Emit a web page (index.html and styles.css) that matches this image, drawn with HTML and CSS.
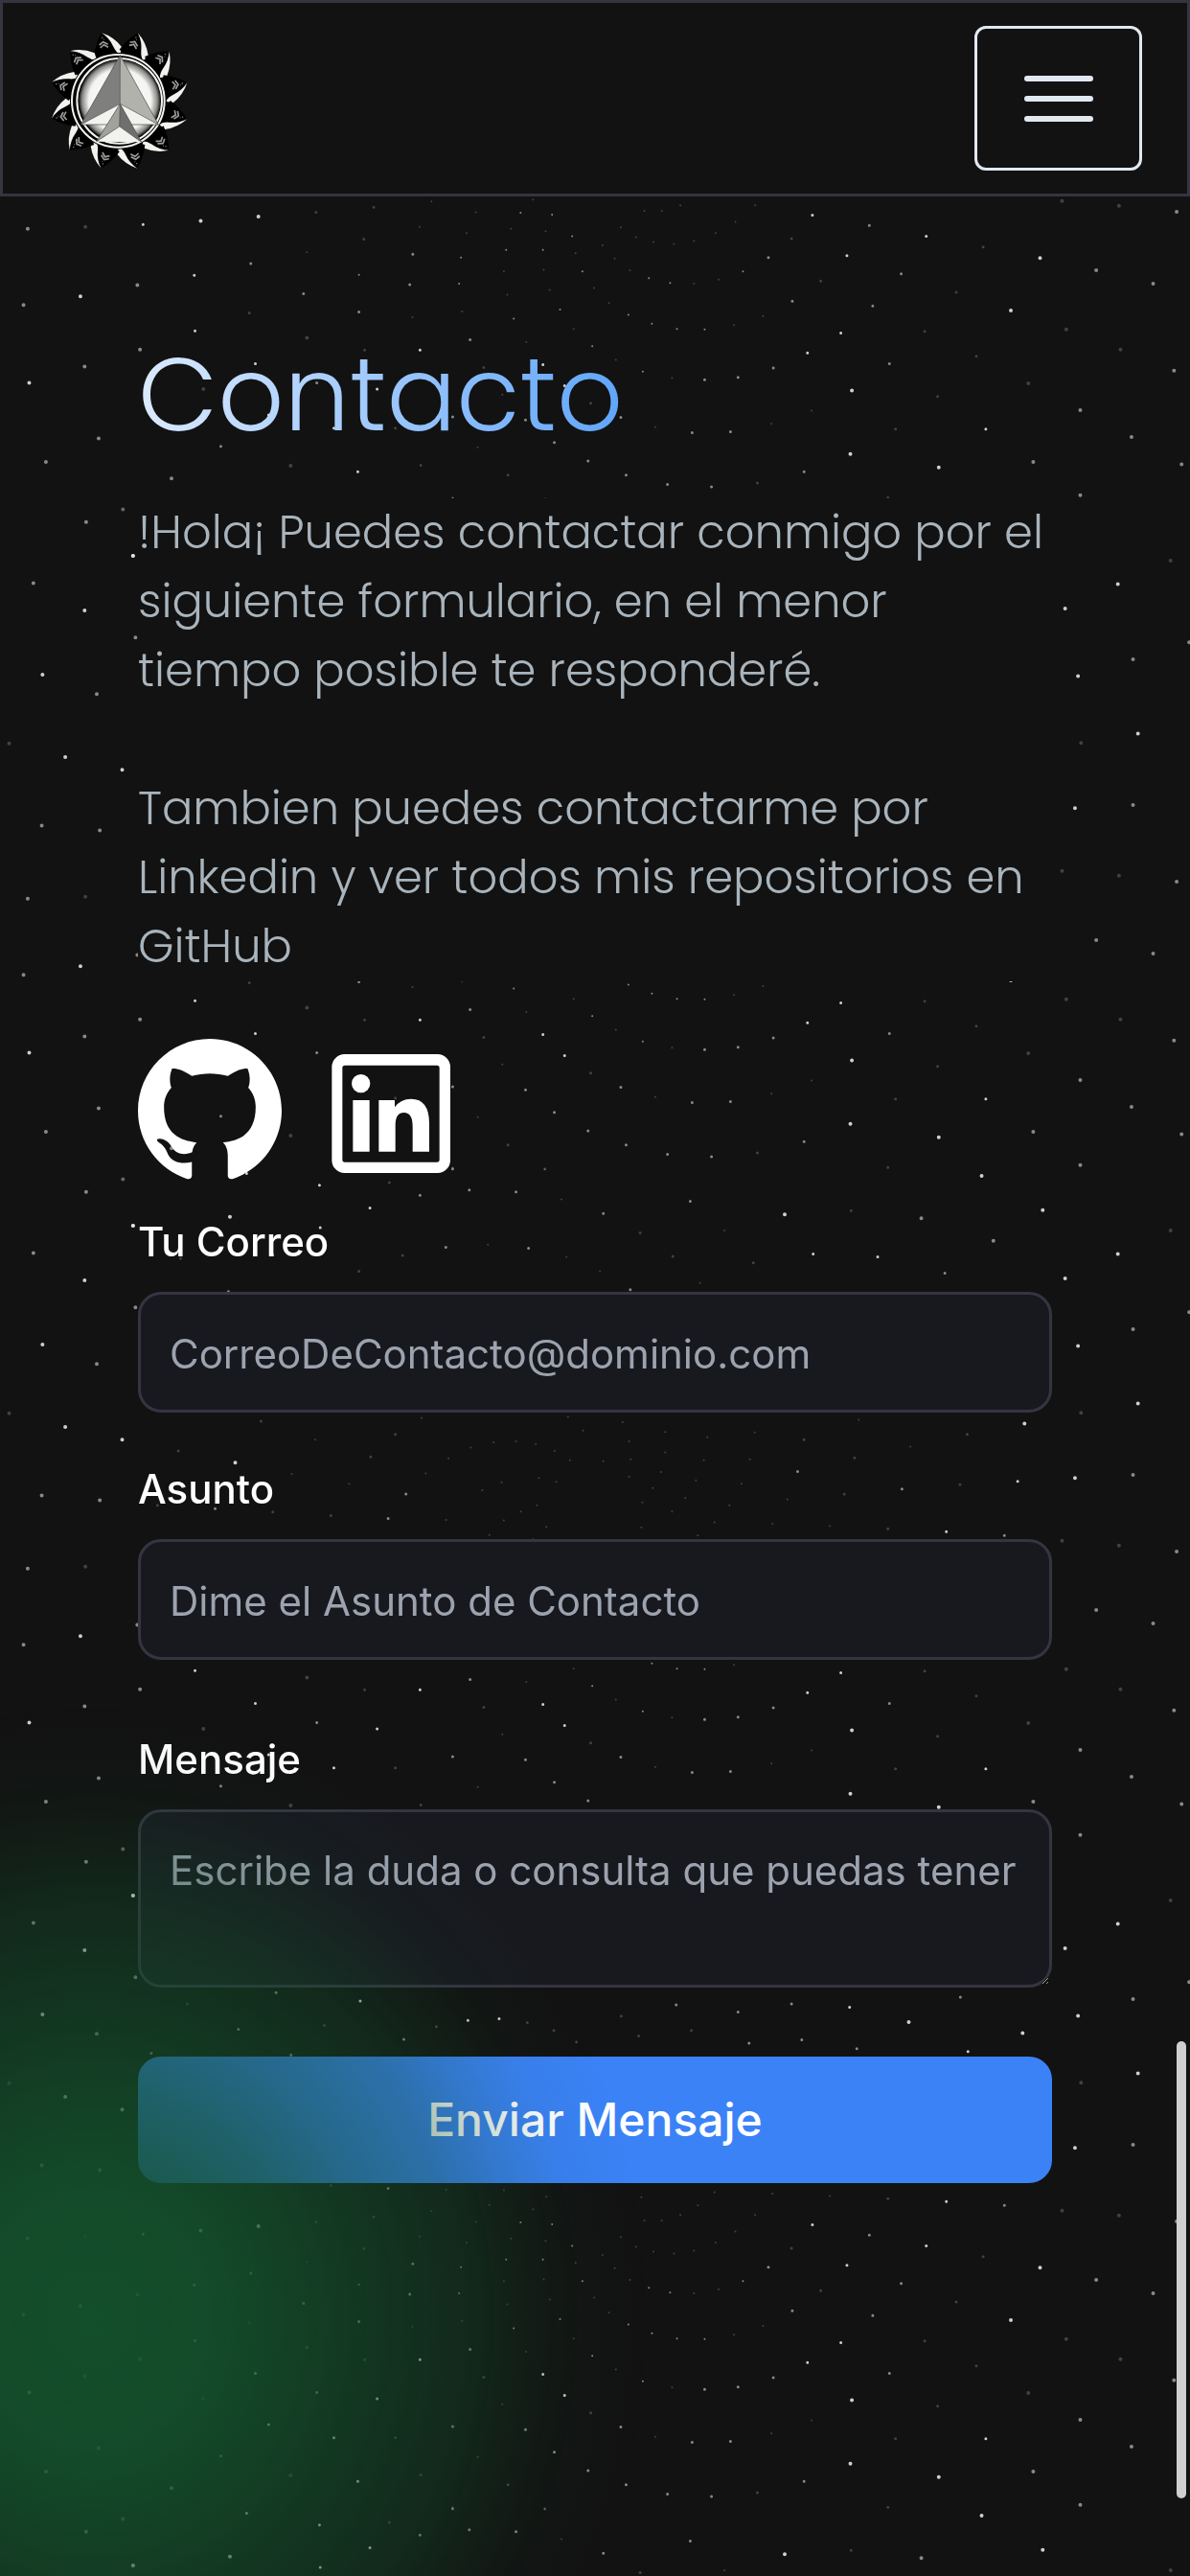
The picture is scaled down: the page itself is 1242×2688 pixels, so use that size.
FILE: index.html
```html
<!DOCTYPE html>
<html lang="es">
<head>
<meta charset="utf-8">
<meta name="viewport" content="width=device-width, initial-scale=1">
<title>Contacto</title>
<link rel="stylesheet" href="styles.css">
</head>
<body>
<svg class="stars" aria-hidden="true">
  <defs>
    <g id="sky">
      <!-- upper left -->
      <g transform="translate(0 200) scale(.396 .51)">
        <path class="s4 hi" d="M212 214h0M77 391h0M351 745h0M529 60h0M681 51h0"/>
        <path class="s4 md" d="M73 76h0M62 232h0M223 358h0M369 323h0M121 553h0M452 587h0M362 191h0M260 505h0"/>
        <path class="s4 lo" d="M225 72h0M809 299h0M324 650h0M536 404h0M766 561h0"/>
        <path class="s3 hi" d="M377 67h0M512 171h0M514 285h0M673 352h0M943 573h0M1107 324h0M1431 354h0M880 484h0M708 457h0M994 404h0M1488 397h0"/>
        <path class="s3 md" d="M661 147h0M800 209h0M1088 128h0M946 246h0M1080 190h0M582 521h0M835 391h0M1239 303h0M1193 461h0M1385 467h0M1461 513h0M1550 551h0"/>
        <path class="s3 lo" d="M985 32h0M833 42h0M959 97h0M657 248h0M961 324h0M1109 560h0M1339 580h0M1042 484h0M1557 433h0M1275 360h0"/>
        <path class="s2 md" d="M1334 119h0M1476 241h0M1354 260h0M1508 91h0M1455 47h0M1431 119h0M1372 43h0M1561 316h0M1535 163h0M946 170h0M1210 188h0M1215 135h0"/>
        <path class="s2 lo" d="M809 124h0M1137 20h0M1106 72h0M1087 257h0M1328 163h0M1337 211h0M1438 81h0M1433 160h0M1449 201h0M1517 126h0M1405 16h0M1347 76h0M1230 85h0M1259 523h0M1324 415h0M1512 281h0M1387 308h0M1218 245h0M1193 626h0M1436 630h0M1254 42h0M1566 197h0"/>
      </g>
      <!-- upper right -->
      <g transform="translate(621 200) scale(.396 .51)">
        <path class="s4 hi" d="M1096 243h0M677 407h0M673 537h0M1173 136h0M906 564h0"/>
        <path class="s4 md" d="M1533 41h0M1321 161h0M1471 188h0M1279 447h0M1414 502h0M1546 558h0M1279 621h0M1155 553h0M1526 366h0"/>
        <path class="s4 lo" d="M1231 19h0M1381 29h0M1242 282h0M1385 323h0M1142 392h0"/>
        <path class="s3 hi" d="M573 48h0M664 131h0M873 91h0M648 289h0M560 330h0M1030 486h0"/>
        <path class="s3 md" d="M723 69h0M457 135h0M520 224h0M732 234h0M470 361h0M377 380h0M289 385h0M807 168h0M776 352h0M357 491h0M256 493h0M307 604h0M82 580h0M191 599h0M68 462h0M551 573h0"/>
        <path class="s3 lo" d="M1023 113h0M952 206h0M869 286h0M1005 337h0M903 419h0M792 486h0M428 596h0M595 183h0M772 626h0M518 96h0"/>
        <path class="s2 md" d="M390 163h0M289 282h0M216 281h0M150 270h0M198 187h0M142 177h0M88 252h0M126 368h0"/>
        <path class="s2 lo" d="M130 39h0M176 39h0M225 28h0M422 28h0M318 85h0M261 101h0M261 188h0M208 107h0M154 103h0M108 93h0M68 73h0M20 110h0M52 137h0M92 161h0M37 228h0M366 273h0M443 255h0M203 381h0M55 344h0M159 482h0M465 475h0M571 448h0M370 62h0M326 180h0"/>
      </g>
      <!-- lower left -->
      <g transform="translate(0 301) scale(.396 .51)">
        <path class="s4 hi" d="M606 529h0M223 659h0M112 790h0M172 959h0M322 985h0M620 1032h0"/>
        <path class="s4 md" d="M88 603h0M227 478h0M255 830h0M357 714h0M110 1099h0M263 1109h0M350 547h0"/>
        <path class="s4 lo" d="M324 452h0M24 931h0"/>
        <path class="s3 hi" d="M842 464h0M975 511h0M844 551h0M650 440h0"/>
        <path class="s3 md" d="M1237 474h0M1193 431h0M1107 485h0M567 1126h0M1023 1146h0M1070 1096h0M1175 591h0M1393 593h0M602 682h0M1360 478h0M719 607h0"/>
        <path class="s3 lo" d="M1026 459h0M1436 431h0M946 640h0M1061 608h0M470 1008h0M688 947h0M415 1119h0M719 1133h0M872 1140h0M977 1020h0M1042 974h0M476 614h0"/>
        <path class="s2 lo" d="M1480 493h0M1286 586h0M1493 611h0M831 985h0M1111 940h0M769 1055h0M920 1075h0M1122 1054h0M1182 1023h0M1241 1001h0M1301 990h0M1360 988h0M1412 994h0M1462 1008h0M1502 1027h0M1537 966h0M1497 938h0M1466 1071h0M1420 1063h0M1322 1072h0M1271 1088h0M1373 1132h0M1415 1119h0M1440 1163h0M1328 1150h0M1176 1149h0M1290 1180h0"/>
      </g>
      <!-- lower right -->
      <g transform="translate(621 301) scale(.396 .51)">
        <path class="s4 hi" d="M1019 445h0M1180 515h0M1378 605h0M1239 655h0M500 524h0M1273 793h0M1431 911h0M1265 1063h0M1132 952h0"/>
        <path class="s4 md" d="M860 532h0M1050 578h0M1418 1057h0M1566 724h0M1418 759h0"/>
        <path class="s4 lo" d="M1517 557h0M1281 930h0"/>
        <path class="s3 hi" d="M575 605h0M745 611h0M926 1173h0M1114 1070h0"/>
        <path class="s3 md" d="M251 497h0M22 522h0M922 644h0M93 678h0M809 1086h0M1079 1181h0M534 1050h0"/>
        <path class="s3 lo" d="M675 516h0M417 623h0M119 562h0M205 610h0M981 974h0M962 1077h0M657 1096h0M772 1167h0M551 985h0M684 1022h0"/>
        <path class="s2 lo" d="M341 557h0M277 664h0M13 640h0M695 944h0M831 999h0M421 970h0M296 980h0M185 969h0M73 949h0M90 988h0M22 1029h0M94 1025h0M185 1011h0M287 1027h0M408 1025h0M174 1051h0M90 1061h0M152 1084h0M266 1068h0M386 1075h0M507 1107h0M354 1119h0M238 1104h0M125 1113h0M203 1132h0M315 1154h0M468 1157h0M619 1162h0M122 1164h0M271 1181h0"/>
      </g>
      <!-- central band -->
      <g transform="translate(0 382) scale(.446 .579)">
        <path class="s3 hi" d="M843 532h0M1095 567h0M1168 564h0"/>
        <path class="s3 md" d="M646 517h0M558 583h0M354 626h0M945 601h0M681 629h0"/>
        <path class="s3 lo" d="M438 537h0M759 576h0M1021 578h0M1296 585h0M1349 606h0M1234 571h0"/>
      </g>
      <g transform="translate(621 382) scale(.396 .579)">
        <path class="s4 hi" d="M827 570h0M1127 590h0"/>
        <path class="s3 hi" d="M671 543h0M983 623h0"/>
        <path class="s3 md" d="M214 539h0M377 552h0M518 537h0M406 608h0M545 602h0M690 618h0M963 525h0"/>
        <path class="s3 lo" d="M254 585h0M115 595h0M69 559h0"/>
      </g>
    </g>
  </defs>
  <use href="#sky"/>
  <use href="#sky" y="699"/>
  <use href="#sky" y="1398"/>
  <use href="#sky" y="2097"/>
</svg>

<header class="topbar">
  <a class="brand" href="#" aria-label="Inicio">
    <svg class="logo" viewBox="3 -9 450 450" aria-hidden="true">
      <defs>
        <radialGradient id="disc">
          <stop offset="0" stop-color="#fff"/>
          <stop offset=".76" stop-color="#f4f4f2"/>
          <stop offset=".92" stop-color="#8b8b88"/>
          <stop offset="1" stop-color="#161616"/>
        </radialGradient>
        <g id="tooth">
          <path fill="#000" d="M168 10Q149 42 144 84L226 96Q222 32 168 10Z"/>
          <path fill="#f2f2ef" d="M168 10Q206 22 231 54L226 77Q213 70 205 53Q193 26 168 10Z"/>
          <path fill="none" stroke="#9b9b98" stroke-width="5" d="M161 48l12-10 15 8M164 57l11-10 14 8"/>
          <path fill="#777" d="M168 23h4v4h-4zM174 29h3v3h-3z"/>
        </g>
      </defs>
      <use href="#tooth"/>
      <use href="#tooth" transform="rotate(30 224 222)"/>
      <use href="#tooth" transform="rotate(60 224 222)"/>
      <use href="#tooth" transform="rotate(90 224 222)"/>
      <use href="#tooth" transform="rotate(120 224 222)"/>
      <use href="#tooth" transform="rotate(150 224 222)"/>
      <use href="#tooth" transform="rotate(180 224 222)"/>
      <use href="#tooth" transform="rotate(210 224 222)"/>
      <use href="#tooth" transform="rotate(240 224 222)"/>
      <use href="#tooth" transform="rotate(270 224 222)"/>
      <use href="#tooth" transform="rotate(300 224 222)"/>
      <use href="#tooth" transform="rotate(330 224 222)"/>
      <circle cx="220" cy="223" r="151" fill="#000"/>
      <circle cx="220" cy="223" r="145" fill="none" stroke="#f2f2ef" stroke-width="6"/>
      <circle cx="224" cy="223" r="133" fill="none" stroke="#f2f2ef" stroke-width="6"/>
      <circle cx="225" cy="222" r="128" fill="url(#disc)"/>
      <path fill="#7f7f7d" d="M226 80L103 297L226 232Z"/>
      <path fill="#b1b2ab" d="M226 80L346 297L226 232Z"/>
      <path fill="#f2f3ee" d="M103 297L226 232L346 297Z"/>
      <path fill="none" stroke="#444" stroke-width="2" d="M226 80L103 297H346ZV232"/>
      <path fill="#a1a29b" d="M226 232L152 350L224 303Z"/>
      <path fill="#6f706e" d="M226 232L293 352L224 303Z"/>
      <path fill="#f2f3ee" d="M152 350L224 303L293 352Z"/>
      <path fill="none" stroke="#444" stroke-width="2" d="M226 232L152 350L224 303L293 352ZL224 303M103 297L226 232L346 297"/>
    </svg>
  </a>
  <button class="menu" type="button" aria-label="Abrir menú">
    <span class="bar"></span>
    <span class="bar"></span>
    <span class="bar"></span>
  </button>
</header>

<main class="page">
  <h1 class="title">Contacto</h1>
  <p class="intro">!Hola¡ Puedes contactar conmigo por el siguiente formulario, en el menor tiempo posible te responderé.<br><br>Tambien puedes contactarme por Linkedin y ver todos mis repositorios en GitHub</p>

  <nav class="social" aria-label="Redes">
    <a class="social-link" href="#" aria-label="GitHub">
      <svg class="icon" viewBox="0 0 24 24" aria-hidden="true"><path d="M12 0c-6.626 0-12 5.373-12 12 0 5.302 3.438 9.8 8.207 11.387.599.111.793-.261.793-.577v-2.234c-3.338.726-4.033-1.416-4.033-1.416-.546-1.387-1.333-1.756-1.333-1.756-1.089-.745.083-.729.083-.729 1.205.084 1.839 1.237 1.839 1.237 1.07 1.834 2.807 1.304 3.492.997.107-.775.418-1.305.762-1.604-2.665-.305-5.467-1.334-5.467-5.931 0-1.311.469-2.381 1.236-3.221-.124-.303-.535-1.524.117-3.176 0 0 1.008-.322 3.301 1.23.957-.266 1.983-.399 3.003-.404 1.02.005 2.047.138 3.006.404 2.291-1.552 3.297-1.23 3.297-1.23.653 1.653.242 2.874.118 3.176.77.84 1.235 1.911 1.235 3.221 0 4.609-2.807 5.624-5.479 5.921.43.372.823 1.102.823 2.222v3.293c0 .319.192.694.801.576 4.765-1.589 8.199-6.086 8.199-11.386 0-6.627-5.373-12-12-12z"/></svg>
    </a>
    <a class="social-link" href="#" aria-label="LinkedIn">
      <svg class="icon" viewBox="0 0 450 450" aria-hidden="true">
        <path fill-rule="evenodd" d="M80 48H371A40 40 0 0 1 411 88V380A40 40 0 0 1 371 420H80A40 40 0 0 1 40 380V88A40 40 0 0 1 80 48ZM81 83A8 8 0 0 0 73 91V378A8 8 0 0 0 81 386H369A8 8 0 0 0 377 378V91A8 8 0 0 0 369 83Z"/>
        <circle cx="131" cy="140" r="29"/>
        <path d="M106 192H158V353H106ZM187 192H237V214Q255 188 288 188Q345 188 345 265V353H293V275Q293 231 266 231Q239 231 239 270V353H187Z"/>
      </svg>
    </a>
  </nav>

  <form class="form">
    <div class="field">
      <label class="label" for="correo">Tu Correo</label>
      <input class="control" id="correo" type="email" placeholder="CorreoDeContacto@dominio.com">
    </div>
    <div class="field">
      <label class="label" for="asunto">Asunto</label>
      <input class="control" id="asunto" type="text" placeholder="Dime el Asunto de Contacto">
    </div>
    <div class="field field-message">
      <label class="label" for="mensaje">Mensaje</label>
      <textarea class="control message" id="mensaje" rows="2" placeholder="Escribe la duda o consulta que puedas tener"></textarea>
    </div>
    <button class="send" type="submit">Enviar Mensaje</button>
  </form>
</main>

<div class="scroll-thumb" aria-hidden="true"></div>
</body>
</html>
```
FILE: styles.css
```css
* {
  box-sizing: border-box;
}

body {
  margin: 0;
  min-height: 100vh;
  background: #121212;
  color: #fff;
  font-family: Inter, "Liberation Sans", sans-serif;
}

/* green light that tints everything near the lower left corner */
body::after {
  content: "";
  position: fixed;
  inset: 0;
  pointer-events: none;
  background: radial-gradient(
    580px 640px at 96px calc(100% - 268px),
    rgba(20, 83, 45, 0.94) 0%,
    rgba(20, 83, 45, 0.87) 21%,
    rgba(20, 83, 45, 0.7) 38%,
    rgba(20, 83, 45, 0.54) 51%,
    rgba(20, 83, 45, 0.37) 67%,
    rgba(20, 83, 45, 0.2) 77%,
    rgba(20, 83, 45, 0.06) 87%,
    rgba(20, 83, 45, 0) 100%
  );
}

.stars {
  position: fixed;
  inset: 0;
  z-index: -1;
  width: 100%;
  height: 100%;
}

.stars path {
  fill: none;
  stroke: #fff;
  stroke-linecap: round;
  vector-effect: non-scaling-stroke;
}

.s4 { stroke-width: 4px; }
.s3 { stroke-width: 3px; }
.s2 { stroke-width: 2px; }
.hi { stroke-opacity: 0.8; }
.md { stroke-opacity: 0.5; }
.lo { stroke-opacity: 0.2; }

.topbar {
  display: flex;
  align-items: center;
  justify-content: space-between;
  padding: 24px 47px 24px 48px;
  border: 3px solid #343541;
  background: #121212;
}

.brand,
.logo,
.social-link,
.icon {
  display: block;
}

.logo {
  width: 150px;
  height: 150px;
}

.menu {
  display: flex;
  flex-direction: column;
  align-items: center;
  justify-content: center;
  gap: 15px;
  width: 175px;
  height: 151px;
  padding: 0;
  border: 3px solid #e2e8f0;
  border-radius: 12px;
  background: none;
}

.bar {
  width: 72px;
  height: 6px;
  border-radius: 3px;
  background: #e2e8f0;
}

.page {
  padding: 147px 144px 144px;
}

.title {
  width: fit-content;
  margin: 0 0 48px;
  background: linear-gradient(to right, #dbeafe, #60a5fa);
  background-clip: text;
  -webkit-background-clip: text;
  color: transparent;
  font-family: Poppins, Inter, sans-serif;
  font-size: 108px;
  font-weight: 300;
  line-height: 120px;
}

.intro {
  margin: 0;
  background: #121212;
  color: #a9b4bc;
  font-family: Poppins, Inter, sans-serif;
  font-size: 48px;
  font-weight: 300;
  line-height: 72px;
}

.social {
  display: flex;
  gap: 39px;
  margin: 60px 0 30px;
}

.icon {
  width: 150px;
  height: 150px;
  fill: #fff;
}

.form {
  display: flex;
  flex-direction: column;
  gap: 48px;
}

.field {
  display: flex;
  flex-direction: column;
  gap: 20px;
}

.field-message {
  margin: 24px 0;
}

.label {
  font-size: 42px;
  font-weight: 500;
  line-height: 64px;
}

.control {
  width: 100%;
  height: 126px;
  padding: 31px 30px 29px;
  border: 3px solid #343541;
  border-radius: 24px;
  background: #18191f;
  color: #fff;
  font: 400 42px/60px Inter, "Liberation Sans", sans-serif;
}

.control::placeholder {
  color: #9ca3af;
  opacity: 1;
}

.message {
  height: 186px;
  overflow: hidden;
  resize: vertical;
}

.send {
  height: 132px;
  padding: 0;
  border: 0;
  border-radius: 24px;
  background: #3b82f6;
  color: #fff;
  font: 500 48px/72px Inter, "Liberation Sans", sans-serif;
}

/* overlay scroll indicator */
.scroll-thumb {
  position: fixed;
  right: 4px;
  bottom: 81px;
  z-index: 1;
  width: 10px;
  height: 477px;
  border-radius: 5px;
  background: #cfcfcf;
}
```
